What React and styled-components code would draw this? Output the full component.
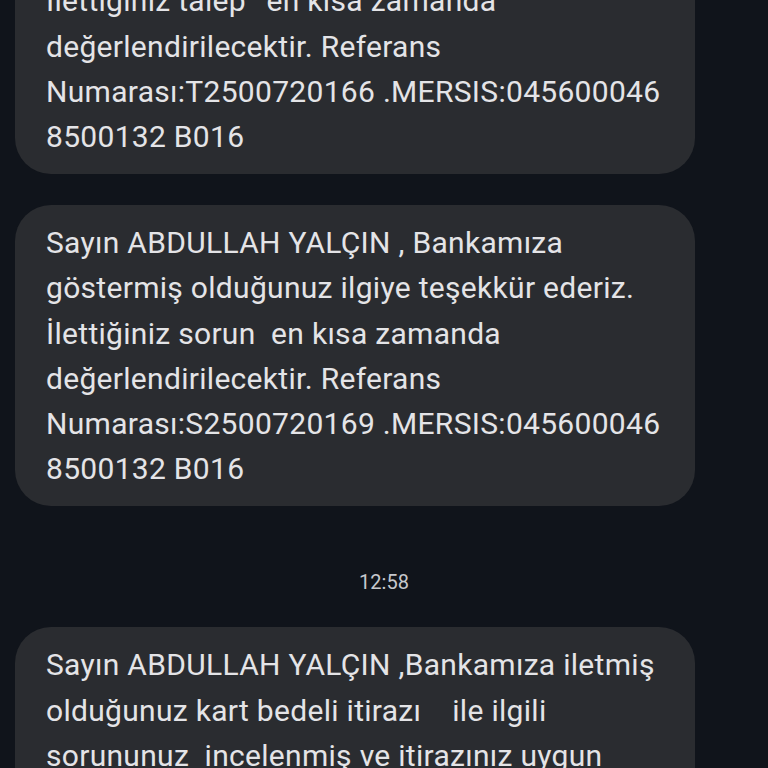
import React from 'react';
import styled, { createGlobalStyle } from 'styled-components';

const GlobalStyle = createGlobalStyle`
  html, body {
    margin: 0;
    padding: 0;
    background: #10141b;
    overflow: hidden;
  }
`;

const Screen = styled.div`
  width: 768px;
  height: 768px;
  overflow: hidden;
  background: #10141b;
  font-family: Roboto, "Noto Sans", sans-serif;
`;

const Thread = styled.div`
  display: flex;
  flex-direction: column;
  align-items: flex-start;
  gap: 31px;
  padding: 0 0 0 15px;
  margin-top: -127px;
`;

const Bubble = styled.div`
  box-sizing: border-box;
  width: 680px;
  background: #2a2c30;
  border-radius: 36px;
  padding: 15px 10px 15px 31px;
  color: #e4e4e7;
  font-size: 30px;
  line-height: 45.2px;
  white-space: pre;
  letter-spacing: 0.3px;
`;

const Stamp = styled.div`
  align-self: stretch;
  text-align: center;
  color: #c6c8cd;
  font-size: 20px;
  line-height: 24px;
  padding: 33px 15px 0 0;
  margin-bottom: 2px;
`;

const messages = [
  {
    id: 1,
    text:
      'Sayın ABDULLAH YALÇIN , Bankamıza\n' +
      'göstermiş olduğunuz ilgiye teşekkür ederiz.\n' +
      "İlettiğiniz talep'  en kısa zamanda\n" +
      'değerlendirilecektir. Referans\n' +
      'Numarası:T2500720166 .MERSIS:045600046\n' +
      '8500132 B016',
  },
  {
    id: 2,
    text:
      'Sayın ABDULLAH YALÇIN , Bankamıza\n' +
      'göstermiş olduğunuz ilgiye teşekkür ederiz.\n' +
      'İlettiğiniz sorun  en kısa zamanda\n' +
      'değerlendirilecektir. Referans\n' +
      'Numarası:S2500720169 .MERSIS:045600046\n' +
      '8500132 B016',
  },
  { id: 't', stamp: '12:58' },
  {
    id: 3,
    text:
      'Sayın ABDULLAH YALÇIN ,Bankamıza iletmiş\n' +
      'olduğunuz kart bedeli itirazı    ile ilgili\n' +
      'sorununuz  incelenmiş ve itirazınız uygun\n' +
      'bulunmuştur.',
  },
];

export default function App() {
  return (
    <Screen>
      <GlobalStyle />
      <Thread>
        {messages.map((m) =>
          m.stamp ? (
            <Stamp key={m.id}>{m.stamp}</Stamp>
          ) : (
            <Bubble key={m.id}>{m.text}</Bubble>
          )
        )}
      </Thread>
    </Screen>
  );
}
